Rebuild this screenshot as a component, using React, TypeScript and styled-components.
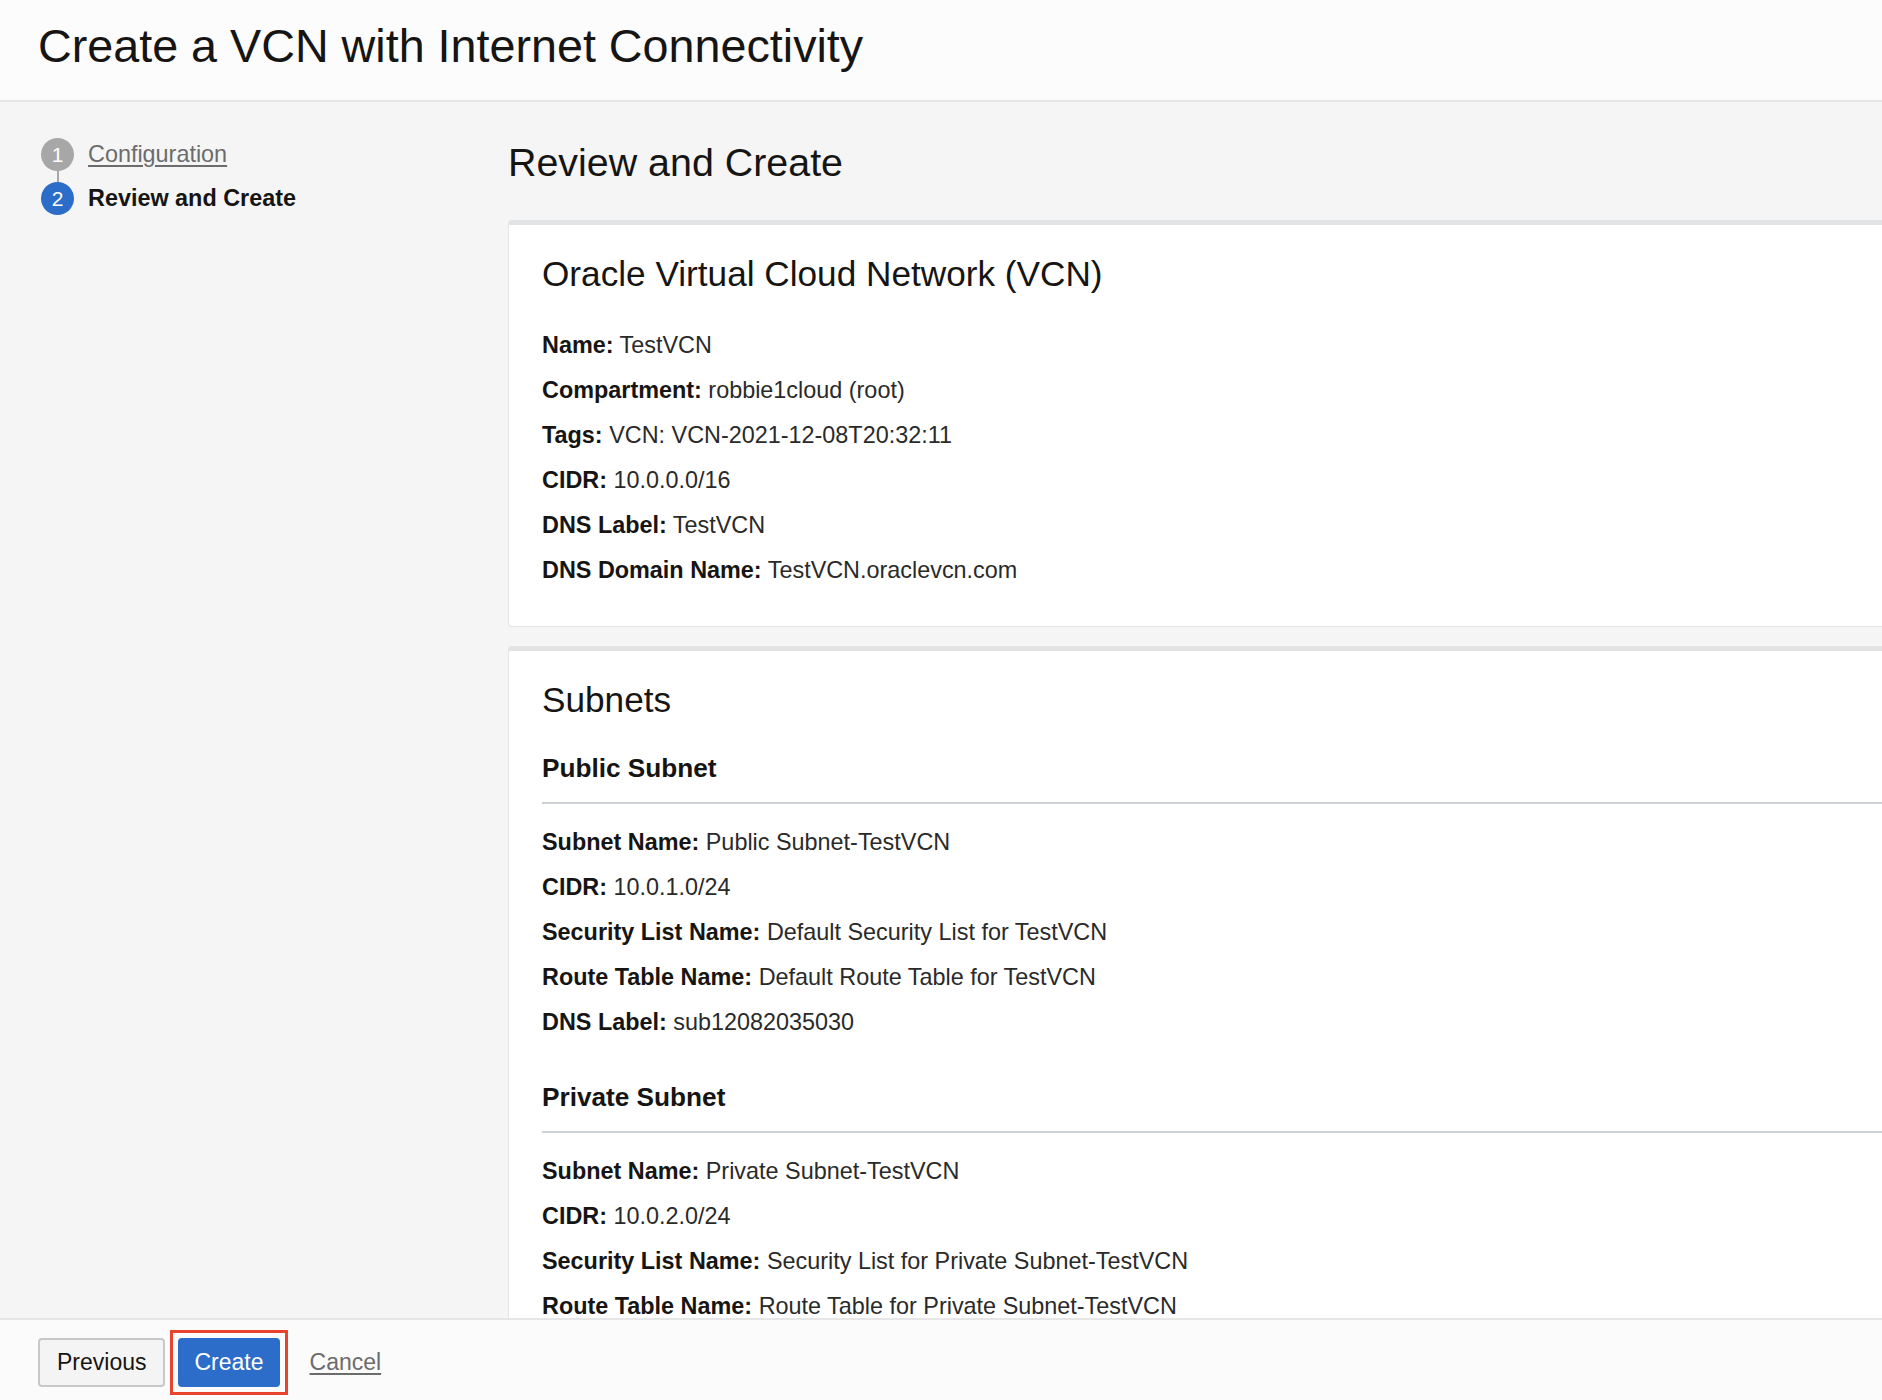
import React from "react";
import styled, { createGlobalStyle } from "styled-components";

const GlobalStyle = createGlobalStyle`
  html, body {
    margin: 0;
    padding: 0;
    background: #f5f5f5;
    font-family: "Liberation Sans", Arial, Helvetica, sans-serif;
    color: #161513;
  }
  * { box-sizing: border-box; }
`;

const Page = styled.div`
  height: 100vh;
  display: flex;
  flex-direction: column;
  overflow: hidden;
`;

const Header = styled.header`
  flex: 0 0 auto;
  height: 102px;
  background: #fcfcfc;
  border-bottom: 2px solid #e6e6e6;
  padding: 0 0 0 38px;
  display: flex;
  align-items: center;
`;

const PageTitle = styled.h1`
  margin: 0 0 8px 0;
  font-size: 46.7px;
  font-weight: 400;
  line-height: 1.2;
  color: #161513;
`;

const Body = styled.div`
  flex: 1 1 auto;
  min-height: 0;
  display: flex;
  overflow: hidden;
`;

const Sidebar = styled.nav`
  flex: 0 0 508px;
  padding: 36px 0 0 41px;
  display: flex;
  flex-direction: column;
`;

const StepRow = styled.div`
  display: flex;
  align-items: center;
  gap: 14px;
  height: 33px;
`;

const StepCircle = styled.span<{ $active?: boolean }>`
  flex: 0 0 33px;
  width: 33px;
  height: 33px;
  border-radius: 50%;
  background: ${(p) => (p.$active ? "#2b6dc8" : "#a7a7a7")};
  color: #ffffff;
  font-size: 21px;
  display: flex;
  align-items: center;
  justify-content: center;
`;

const StepConnector = styled.span`
  display: block;
  width: 2px;
  height: 11px;
  margin-left: 15.5px;
  background: #a7a7a7;
`;

const StepLink = styled.a`
  font-size: 23.4px;
  color: #6c6c6c;
  text-decoration: underline;
  text-underline-offset: 3px;
`;

const StepCurrent = styled.span`
  font-size: 23.4px;
  font-weight: 700;
  color: #161513;
`;

const Main = styled.main`
  flex: 1 1 auto;
  min-width: 0;
  padding-top: 37px;
  overflow: hidden;
`;

const SectionHeading = styled.h2`
  margin: 0 0 34px 0;
  font-size: 39.4px;
  font-weight: 400;
  line-height: 47px;
  color: #161513;
`;

const Card = styled.section`
  width: calc(100% + 6px);
  background: #ffffff;
  border: 1px solid #e4e4e4;
  border-top: 5px solid #e2e3e5;
  border-radius: 4px;
  padding: 28px 0 33px 33px;
  margin-bottom: 19px;
`;

const CardTitle = styled.h3`
  margin: 0 0 28px 0;
  font-size: 35.2px;
  font-weight: 400;
  line-height: 42px;
  color: #161513;
`;

const SubHeading = styled.h4`
  margin: 0 0 16px 0;
  padding-bottom: 18px;
  font-size: 26.2px;
  font-weight: 700;
  line-height: 31px;
  color: #161513;
  border-bottom: 2px solid #cdd1d6;
`;

const SubSection = styled.div`
  &:first-of-type {
    padding-top: 4px;
  }
  & + & {
    margin-top: 37px;
  }
`;

const FieldRow = styled.div`
  font-size: 23.4px;
  line-height: 45px;
  height: 45px;
  white-space: nowrap;
  color: #2a2a2a;
`;

const FieldLabel = styled.span`
  font-weight: 700;
  color: #161513;
`;

const Footer = styled.footer`
  flex: 0 0 82px;
  background: #fbfbfb;
  border-top: 2px solid #e6e6e6;
  padding: 4px 0 0 38px;
  display: flex;
  align-items: center;
  gap: 5px;
`;

const Button = styled.button<{ $primary?: boolean }>`
  height: 49px;
  padding: 0 ${(p) => (p.$primary ? "14px" : "17px")};
  font-family: inherit;
  font-size: 23px;
  border-radius: 4px;
  cursor: pointer;
  border: 2px solid ${(p) => (p.$primary ? "#2b6dc8" : "#c8c8c8")};
  background: ${(p) => (p.$primary ? "#2b6dc8" : "#f4f4f4")};
  color: ${(p) => (p.$primary ? "#ffffff" : "#161513")};
`;

const Highlight = styled.span`
  display: inline-flex;
  padding: 5px;
  border: 3px solid #e8432d;
  margin-right: 17px;
`;

const CancelLink = styled.a`
  font-size: 23px;
  color: #6c6c6c;
  text-decoration: underline;
  text-underline-offset: 3px;
`;

type Field = [string, string];

const vcnFields: Field[] = [
  ["Name:", "TestVCN"],
  ["Compartment:", "robbie1cloud (root)"],
  ["Tags:", "VCN: VCN-2021-12-08T20:32:11"],
  ["CIDR:", "10.0.0.0/16"],
  ["DNS Label:", "TestVCN"],
  ["DNS Domain Name:", "TestVCN.oraclevcn.com"],
];

const publicFields: Field[] = [
  ["Subnet Name:", "Public Subnet-TestVCN"],
  ["CIDR:", "10.0.1.0/24"],
  ["Security List Name:", "Default Security List for TestVCN"],
  ["Route Table Name:", "Default Route Table for TestVCN"],
  ["DNS Label:", "sub12082035030"],
];

const privateFields: Field[] = [
  ["Subnet Name:", "Private Subnet-TestVCN"],
  ["CIDR:", "10.0.2.0/24"],
  ["Security List Name:", "Security List for Private Subnet-TestVCN"],
  ["Route Table Name:", "Route Table for Private Subnet-TestVCN"],
];

const Fields = ({ items }: { items: Field[] }) => (
  <>
    {items.map(([label, value]) => (
      <FieldRow key={label}>
        <FieldLabel>{label}</FieldLabel> {value}
      </FieldRow>
    ))}
  </>
);

export default function App() {
  return (
    <>
      <GlobalStyle />
      <Page>
        <Header>
          <PageTitle>Create a VCN with Internet Connectivity</PageTitle>
        </Header>
        <Body>
          <Sidebar>
            <StepRow>
              <StepCircle>1</StepCircle>
              <StepLink href="#">Configuration</StepLink>
            </StepRow>
            <StepConnector />
            <StepRow>
              <StepCircle $active>2</StepCircle>
              <StepCurrent>Review and Create</StepCurrent>
            </StepRow>
          </Sidebar>
          <Main>
            <SectionHeading>Review and Create</SectionHeading>
            <Card>
              <CardTitle>Oracle Virtual Cloud Network (VCN)</CardTitle>
              <Fields items={vcnFields} />
            </Card>
            <Card>
              <CardTitle>Subnets</CardTitle>
              <SubSection>
                <SubHeading>Public Subnet</SubHeading>
                <Fields items={publicFields} />
              </SubSection>
              <SubSection>
                <SubHeading>Private Subnet</SubHeading>
                <Fields items={privateFields} />
              </SubSection>
            </Card>
          </Main>
        </Body>
        <Footer>
          <Button>Previous</Button>
          <Highlight>
            <Button $primary>Create</Button>
          </Highlight>
          <CancelLink href="#">Cancel</CancelLink>
        </Footer>
      </Page>
    </>
  );
}
